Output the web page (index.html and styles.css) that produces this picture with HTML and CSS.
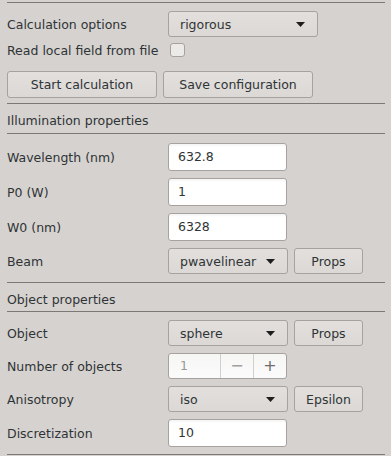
FILE: index.html
```html
<!DOCTYPE html>
<html lang="en">
<head>
    <meta charset="UTF-8">
    <meta name="viewport" content="width=device-width, initial-scale=1.0">
    <title>Calculation settings</title>
    <link rel="stylesheet" href="styles.css">
</head>
<body>

<div class="panel">
    <div class="sep first"></div>

    <div class="row calc-row">
        <span class="lbl">Calculation options</span>
        <div class="combo combo-wide">
            <span>rigorous</span>
            <svg class="arrow" width="9" height="5" viewBox="0 0 9 5"><polygon points="0,0 9,0 4.5,5"/></svg>
        </div>
    </div>
    <div class="row check-row">
        <span class="lbl">Read local field from file</span>
        <span class="check"></span>
    </div>
    <div class="actions">
        <button class="btn btn-wide">Start calculation</button>
        <button class="btn btn-wide">Save configuration</button>
    </div>

    <div class="sep after-actions"></div>
    <div class="heading">Illumination properties</div>
    <div class="sep"></div>

    <div class="row first-row entry-row">
        <span class="lbl">Wavelength (nm)</span>
        <div class="entry">632.8</div>
    </div>
    <div class="row entry-row">
        <span class="lbl">P0 (W)</span>
        <div class="entry">1</div>
    </div>
    <div class="row entry-row">
        <span class="lbl">W0 (nm)</span>
        <div class="entry">6328</div>
    </div>
    <div class="row">
        <span class="lbl">Beam</span>
        <div class="combo">
            <span>pwavelinear</span>
            <svg class="arrow" width="9" height="5" viewBox="0 0 9 5"><polygon points="0,0 9,0 4.5,5"/></svg>
        </div>
        <button class="btn btn-small">Props</button>
    </div>

    <div class="sep after-section"></div>
    <div class="heading short">Object properties</div>
    <div class="sep"></div>

    <div class="row first-obj">
        <span class="lbl">Object</span>
        <div class="combo">
            <span>sphere</span>
            <svg class="arrow" width="9" height="5" viewBox="0 0 9 5"><polygon points="0,0 9,0 4.5,5"/></svg>
        </div>
        <button class="btn btn-small">Props</button>
    </div>
    <div class="row">
        <span class="lbl">Number of objects</span>
        <div class="spin">
            <span class="spin-value">1</span>
            <span class="spin-btn minus">&minus;</span>
            <span class="spin-btn plus">+</span>
        </div>
    </div>
    <div class="row">
        <span class="lbl">Anisotropy</span>
        <div class="combo">
            <span>iso</span>
            <svg class="arrow" width="9" height="5" viewBox="0 0 9 5"><polygon points="0,0 9,0 4.5,5"/></svg>
        </div>
        <button class="btn btn-small">Epsilon</button>
    </div>
    <div class="row entry-row">
        <span class="lbl">Discretization</span>
        <div class="entry">10</div>
    </div>

    <div class="sep last"></div>
</div>

</body>
</html>
```

FILE: styles.css
```css
body {
    font-family: "DejaVu Sans", sans-serif;
    font-size: 12.5px;
    color: #2e3436;
    background-color: #d6d2cf;
    margin: 0;
    padding: 0;
}

.panel {
    padding: 2px 6px 0 7px;
}

.sep {
    border-top: 1px solid #7b7876;
}

.sep.after-actions {
    margin-top: 5px;
}

.sep.after-section {
    margin-top: 8px;
}

.sep.last {
    margin-top: 7px;
}

.heading {
    box-sizing: border-box;
    height: 29px;
    padding-top: 4px;
    line-height: 25px;
}

.heading.short {
    height: 28px;
}

.row {
    display: flex;
    align-items: center;
    margin-top: 7px;
}

.calc-row {
    margin-top: 8px;
}

.check-row {
    margin-top: 6px;
    height: 14px;
}

.first-row {
    margin-top: 9px;
}

.first-obj {
    margin-top: 8px;
}

.lbl {
    width: 161px;
    flex: none;
}

.combo {
    box-sizing: border-box;
    width: 120px;
    height: 26px;
    display: flex;
    align-items: center;
    justify-content: space-between;
    padding: 0 12px 0 11px;
    border: 1px solid #a7a29e;
    border-radius: 3px;
    background: linear-gradient(#e2dfdc, #dcd8d5);
}

.combo-wide {
    width: 150px;
}

.arrow {
    fill: #1e1e1e;
}

.check {
    box-sizing: border-box;
    width: 15px;
    height: 14px;
    margin-left: 2px;
    border: 1px solid #a7a29e;
    border-radius: 3px;
    background-color: #eceae8;
}

.actions {
    display: flex;
    gap: 6px;
    margin-top: 14px;
}

.btn {
    box-sizing: border-box;
    height: 27px;
    font-family: inherit;
    font-size: inherit;
    color: inherit;
    padding: 0;
    border: 1px solid #a7a29e;
    border-radius: 3px;
    background: linear-gradient(#e2dfdc, #dcd8d5);
}

.btn-wide {
    width: 150px;
}

.btn-small {
    width: 69px;
    height: 26px;
    margin-left: 6px;
}

.entry {
    box-sizing: border-box;
    width: 119px;
    height: 28px;
    line-height: 26px;
    padding-left: 9px;
    border: 1px solid #a7a29e;
    border-radius: 3px;
    background-color: #ffffff;
    box-shadow: inset 0 2px 2px rgba(0, 0, 0, 0.04);
}

.spin {
    box-sizing: border-box;
    width: 119px;
    height: 26px;
    display: flex;
    border: 1px solid #a7a29e;
    border-radius: 3px;
    background: linear-gradient(#f6f6f5, #fbfbfb);
}

.spin-value {
    width: 52px;
    padding-left: 11px;
    line-height: 24px;
    color: #9a9896;
    box-sizing: border-box;
}

.spin-btn {
    width: 33px;
    line-height: 24px;
    text-align: center;
    border-left: 1px solid #d2d0ce;
    font-size: 16px;
}

.spin-btn.minus {
    color: #a3a19f;
}

.spin-btn.plus {
    color: #6f6d6b;
}
```
